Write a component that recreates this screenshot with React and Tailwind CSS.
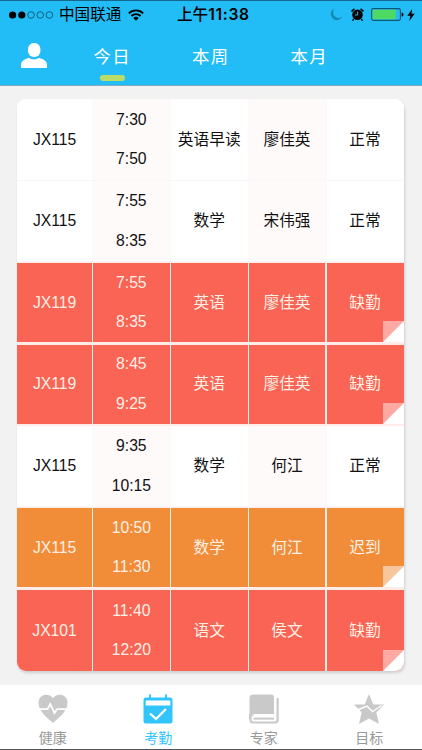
import React, { useState } from "react";

const lessons = [
  { room: "JX115", start: "7:30", end: "7:50", subject: "英语早读", teacher: "廖佳英", status: "正常" },
  { room: "JX115", start: "7:55", end: "8:35", subject: "数学", teacher: "宋伟强", status: "正常" },
  { room: "JX119", start: "7:55", end: "8:35", subject: "英语", teacher: "廖佳英", status: "缺勤" },
  { room: "JX119", start: "8:45", end: "9:25", subject: "英语", teacher: "廖佳英", status: "缺勤" },
  { room: "JX115", start: "9:35", end: "10:15", subject: "数学", teacher: "何江", status: "正常" },
  { room: "JX115", start: "10:50", end: "11:30", subject: "数学", teacher: "何江", status: "迟到" },
  { room: "JX101", start: "11:40", end: "12:20", subject: "语文", teacher: "侯文", status: "缺勤" },
];

const cellColor = {
  正常: "bg-white",
  缺勤: "bg-[#f96454]",
  迟到: "bg-[#f18d38]",
};

const StatusBar = () => {
  return (
    <div className="relative flex h-[28px] items-center justify-between border-t border-[#14678d] pl-[9px] pr-[7px] text-black">
      <div className="flex items-center">
        <svg width="45" height="8" viewBox="0 0 45 8">
          <circle cx="3.6" cy="4" r="3.6" />
          <circle cx="12.8" cy="4" r="3.6" />
          <g fill="none" stroke="#0b4a63" strokeWidth="0.8">
            <circle cx="22" cy="4" r="3.3" />
            <circle cx="31.2" cy="4" r="3.3" />
            <circle cx="40.4" cy="4" r="3.3" />
          </g>
        </svg>
        <span className="ml-[5px] text-[15.6px] leading-none">中国联通</span>
        <svg className="ml-[7px]" width="16" height="12" viewBox="0 0 16 12">
          <g fill="none" stroke="#000" strokeWidth="1.9">
            <path d="M0.8 4.4C4.8 0.4 11.2 0.4 15.2 4.4" />
            <path d="M3.4 7C6 4.5 10 4.5 12.6 7" />
          </g>
          <path d="M5.3 8.9C6.8 7.5 9.2 7.5 10.7 8.9L8 11.7Z" />
        </svg>
      </div>
      <span className="absolute left-[177px] top-[6px] whitespace-nowrap text-[15.6px] font-medium leading-[16px]">
        上午<span className="font-['Inter'] text-[15.6px] font-semibold tracking-[0.7px]">11:38</span>
      </span>
      <div className="flex items-center">
        <svg width="13" height="13" viewBox="0 0 13 13">
          <path d="M4.5 0.6A6 6 0 1 0 12.3 8.6A5.6 5.6 0 0 1 4.5 0.6Z" fill="#1588b1" />
        </svg>
        <svg className="ml-[8px]" width="13" height="13" viewBox="0 0 13 13">
          <circle cx="6.5" cy="6.8" r="5.3" />
          <path d="M0.5 3.4L3.4 0.9M12.5 3.4L9.6 0.9M2.8 11L1.4 12.6M10.2 11L11.6 12.6" stroke="#000" strokeWidth="1.4" />
          <path d="M6.7 3.6V7H4" fill="none" stroke="#22bdf5" strokeWidth="1" />
        </svg>
        <svg className="ml-[7px]" width="33" height="13" viewBox="0 0 33 13">
          <rect x="0.6" y="0.6" width="28.8" height="11.8" rx="1.8" fill="none" stroke="#0b5576" strokeWidth="1.1" />
          <rect x="1.7" y="1.7" width="23" height="9.6" rx="0.6" fill="#4cd964" />
          <path d="M30.7 4.4C33 4.6 33 8.4 30.7 8.6Z" />
        </svg>
        <svg className="ml-[3px]" width="8" height="12" viewBox="0 0 8 12">
          <path d="M5.2 0L0.3 6.8H3.4L2.2 12L7.7 4.8H4.5Z" />
        </svg>
      </div>
    </div>
  );
};

const Header = ({ tab, setTab }) => {
  return (
    <header className="h-[86px] shrink-0 border-b border-[#87a9b5] bg-[#22bdf6]">
      <StatusBar />
      <div className="flex h-[57px] items-start text-white">
        <svg className="ml-[21px] mt-[15px]" width="26" height="25" viewBox="0 0 26 25">
          <rect x="7" y="0" width="12.4" height="14" rx="5.8" fill="#fff" />
          <path d="M0 25V21.5C0 17.5 5 16 8 14.8C11 17 15 17 18 14.8C21 16 26 17.5 26 21.5V25Z" fill="#fff" />
        </svg>
        <nav className="ml-[16px] flex">
          {["今日", "本周", "本月"].map((name) => (
            <button
              key={name}
              onClick={() => setTab(name)}
              className="flex h-[54px] w-[98.5px] flex-col items-center"
            >
              <span className="mt-[19px] text-[17.4px] leading-[20px] tracking-[1.4px]">{name}</span>
              {tab === name && <span className="mt-[8px] h-[6px] w-[25px] rounded-full bg-[#bcdc68]" />}
            </button>
          ))}
        </nav>
      </div>
    </header>
  );
};

const FoldedCorner = () => {
  return (
    <svg className="absolute bottom-0 right-0" width="21" height="21" viewBox="0 0 21 21">
      <path d="M0 0H21V21H0Z" fill="#fff" />
      <path d="M0 0H21L0 21Z" fill="currentColor" />
    </svg>
  );
};

const LessonRow = ({ lesson, last }) => {
  const normal = lesson.status === "正常";
  const color = cellColor[lesson.status];
  const tinted = normal ? "bg-[#fffafa]" : color;
  const cell = "flex items-center justify-center";

  return (
    <div
      className={`grid h-[81.7px] grid-cols-[74.5px_76.7px_76.7px_76.6px_77px] gap-x-[1.2px] ${
        normal ? "border-b border-[#f8f6f6] bg-[#fbf9f9] text-[#111]" : "bg-[#ffece8] pt-[0.7px] text-[#fff0e6]"
      } ${normal || last ? "" : "pb-[2px]"}`}
    >
      <div className={`${cell} ${color}`}>{lesson.room}</div>
      <div className={`${cell} ${tinted} flex-col gap-[19.6px] leading-[20px]`}>
        <span>{lesson.start}</span>
        <span>{lesson.end}</span>
      </div>
      <div className={`${cell} ${color}`}>{lesson.subject}</div>
      <div className={`${cell} ${tinted}`}>{lesson.teacher}</div>
      <div className={`${cell} ${color} relative`}>
        {lesson.status}
        {!normal && (
          <span className={lesson.status === "迟到" ? "text-[#f8c69d]" : "text-[#fdaaa4]"}>
            <FoldedCorner />
          </span>
        )}
      </div>
    </div>
  );
};

const HealthIcon = () => (
  <svg width="30" height="30" viewBox="0 0 30 30">
    <path d="M15 29C11 25 0.5 18 0.5 9C0.5 -0.5 11-1.5 15 4C19-1.5 29.5-0.5 29.5 9C29.5 18 19 25 15 29Z" fill="currentColor" />
    <path d="M0 15.2H9.5L12.2 10L16.5 19L19 15.2H30" fill="none" stroke="#fff" strokeWidth="1.8" />
  </svg>
);

const AttendanceIcon = () => (
  <svg width="30" height="30" viewBox="0 0 30 30">
    <path d="M7 0.5V5M23 0.5V5" stroke="currentColor" strokeWidth="2" />
    <rect x="0.5" y="3.5" width="29" height="26" rx="2.5" fill="currentColor" />
    <path d="M2.7 6.5H27.3V11.5H2.7Z" fill="#fff" />
    <path d="M7 19.5L13 25L23 15" fill="none" stroke="#fff" strokeWidth="2.3" />
  </svg>
);

const ExpertIcon = () => (
  <svg width="30" height="30" viewBox="0 0 30 30">
    <path d="M4 0.5H22Q25 0.5 25 3.5V20H4Q1.5 20 0.5 22V4Q0.5 0.5 4 0.5Z" fill="currentColor" />
    <path d="M0.5 20V25" stroke="currentColor" strokeWidth="1.6" />
    <path d="M28.6 4V26Q28.6 28.5 26 28.5H4Q1.4 28.5 1.4 25Q1.4 20.5 4.5 20.5" fill="none" stroke="currentColor" strokeWidth="2.2" />
    <path d="M4.5 24.6H25" stroke="currentColor" strokeWidth="2" />
  </svg>
);

const GoalIcon = () => (
  <svg width="30" height="30" viewBox="0 0 30 30">
    <path d="M15 0L19.3 10.5H30L22.3 18.5L25 30L15 24.5L5 30L7.7 18.5L0 10.5H10.7Z" fill="currentColor" />
    <path d="M3.5 16L13 12L18.5 17.5L27.5 11.5" fill="none" stroke="#fff" strokeWidth="1.4" />
  </svg>
);

const menu = [
  { name: "健康", Icon: HealthIcon },
  { name: "考勤", Icon: AttendanceIcon },
  { name: "专家", Icon: ExpertIcon },
  { name: "目标", Icon: GoalIcon },
];

const App = () => {
  const [tab, setTab] = useState("今日");
  const [page, setPage] = useState("考勤");

  return (
    <div className="flex h-[750px] w-[422px] flex-col overflow-hidden bg-[#f2f2f2] font-['Liberation_Sans','Noto_Sans_CJK_SC',sans-serif]">
      <Header tab={tab} setTab={setTab} />
      <main className="flex-1 pl-[17.3px] pt-[13px]">
        <div className="w-[386.3px] overflow-hidden rounded-[9px] bg-white text-[15.7px] shadow-[1px_2px_3px_rgba(0,0,0,0.15)]">
          {lessons.map((lesson, i) => (
            <LessonRow key={i} lesson={lesson} last={i === lessons.length - 1} />
          ))}
        </div>
      </main>
      <footer className="flex h-[65px] shrink-0 border-b border-[#555] bg-white">
        {menu.map(({ name, Icon }) => (
          <button
            key={name}
            onClick={() => setPage(name)}
            className={`flex flex-1 flex-col items-center pt-[9px] ${page === name ? "text-[#31c5fb]" : "text-[#c9c9c9]"}`}
          >
            <Icon />
            <span className={`mt-[5px] text-[14px] leading-[18px] ${page === name ? "" : "text-[#999]"}`}>{name}</span>
          </button>
        ))}
      </footer>
    </div>
  );
};

export default App;
